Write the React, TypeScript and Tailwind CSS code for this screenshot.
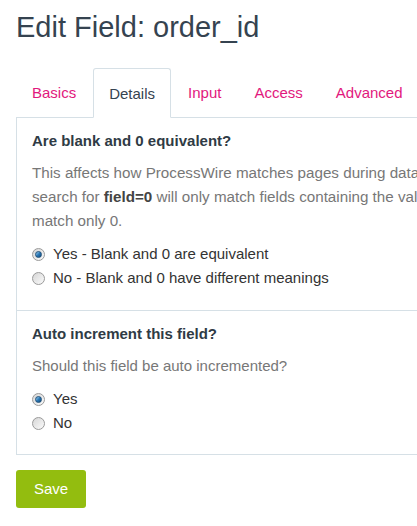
import React from "react";

function Radio({ checked, label }: { checked?: boolean; label: string }) {
  return (
    <div className="flex items-center h-[24px]">
      <span className="relative w-[13px] h-[13px] rounded-full border border-[#9a9a9a] bg-gradient-to-br from-[#d6d6d6] to-[#fbfbfb] flex items-center justify-center shrink-0">
        {checked && (
          <span className="w-[7px] h-[7px] rounded-full bg-gradient-to-br from-[#9fd4f3] via-[#2a79b7] to-[#14497a] border border-[#1f4f78]" />
        )}
      </span>
      <span className="ml-[8px] text-[#333] text-[15px]">{label}</span>
    </div>
  );
}

export default function App() {
  const tabs = ["Basics", "Details", "Input", "Access", "Advanced"];
  return (
    <div
      className="w-[417px] h-[526px] bg-white overflow-hidden pl-[16px]"
      style={{ fontFamily: '"Liberation Sans", Arial, sans-serif' }}
    >
      <h1 className="pt-[9px] text-[29px] leading-[36px] text-[#354350] whitespace-nowrap">
        Edit Field: order_id
      </h1>
      <div className="mt-[23px] flex whitespace-nowrap">
        {tabs.map((t) =>
          t === "Details" ? (
            <div
              key={t}
              className="px-[15px] pt-[2px] mr-[1px] h-[50px] flex items-center border border-[#d6e0e6] border-b-white bg-white rounded-t-[3px] text-[15px] text-[#354350] relative z-10 -mb-px"
            >
              {t}
            </div>
          ) : (
            <div
              key={t}
              className="px-[16px] pt-[2px] mr-[1px] h-[49px] flex items-center text-[15px] text-[#e2187d]"
            >
              {t}
            </div>
          )
        )}
      </div>
      <div className="border border-[#d6e0e6] w-[430px] text-[15px]">
        <div className="px-[15px] pt-[13px] pb-[20px]">
          <div className="font-bold text-[#2f3b45] leading-[20px]">
            Are blank and 0 equivalent?
          </div>
          <p className="mt-[10px] text-[#777] leading-[24px] whitespace-nowrap text-[15.2px]">
            This affects how ProcessWire matches pages during database
            <br />
            search for <b className="text-[#444]">field=0</b> will only match fields containing the value 0 and
            <br />
            match only 0.
          </p>
          <div className="mt-[9px]">
            <Radio checked label="Yes - Blank and 0 are equivalent" />
            <Radio label="No - Blank and 0 have different meanings" />
          </div>
        </div>
        <div className="border-t border-[#d6e0e6] px-[15px] pt-[13px] pb-[19px]">
          <div className="font-bold text-[#2f3b45] leading-[20px]">
            Auto increment this field?
          </div>
          <p className="mt-[10px] text-[#777] leading-[24px]">
            Should this field be auto incremented?
          </p>
          <div className="mt-[9px]">
            <Radio checked label="Yes" />
            <Radio label="No" />
          </div>
        </div>
      </div>
      <button className="mt-[15px] w-[70px] h-[38px] rounded-[3px] bg-[#93bd0f] text-white text-[15px]">
        Save
      </button>
    </div>
  );
}
